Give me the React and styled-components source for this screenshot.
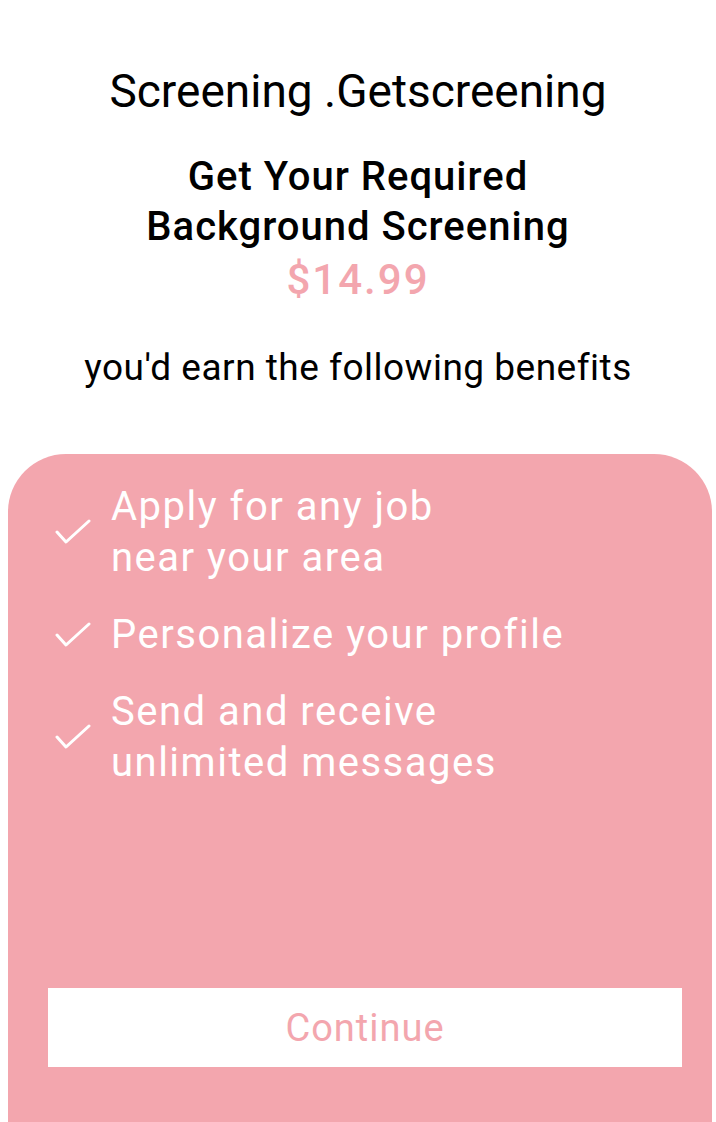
import styled, { createGlobalStyle } from 'styled-components';

const GlobalStyle = createGlobalStyle`
  html, body {
    margin: 0;
    padding: 0;
    background: #ffffff;
    font-family: Roboto, "Liberation Sans", Arial, sans-serif;
  }
`;

const PINK = '#f3a6ae';

const Page = styled.div`
  width: 716px;
  height: 1122px;
  display: flex;
  flex-direction: column;
  overflow: hidden;
`;

const Header = styled.div`
  display: flex;
  flex-direction: column;
  align-items: center;
  text-align: center;
  padding-top: 63px;
  height: 390px;
  box-sizing: border-box;
  color: #000;
`;

const Title = styled.h1`
  margin: 0;
  font-size: 46px;
  font-weight: 400;
  line-height: 56px;
`;

const Offer = styled.h2`
  margin: 33px 0 0;
  font-size: 40px;
  font-weight: 500;
  letter-spacing: 1px;
  line-height: 50px;
`;

const Price = styled.div`
  margin-top: 2px;
  font-size: 42px;
  font-weight: 500;
  letter-spacing: 2px;
  line-height: 52px;
  color: ${PINK};
`;

const Subtitle = styled.p`
  margin: 38px 0 0;
  font-size: 37px;
  letter-spacing: 0.5px;
  line-height: 48px;
`;

const Panel = styled.div`
  flex: 1;
  margin: 64px 4px 0 8px;
  background: ${PINK};
  border-radius: 58px 58px 0 0;
  display: flex;
  flex-direction: column;
  padding: 27px 30px 55px 40px;
`;

const List = styled.ul`
  list-style: none;
  margin: 0;
  padding: 0;
  display: flex;
  flex-direction: column;
  gap: 26px;
`;

const Item = styled.li`
  display: flex;
  align-items: center;
  gap: 20px;
  color: #fff;
  font-size: 40px;
  letter-spacing: 1.5px;
  line-height: 51px;
`;

const Check = styled.svg`
  width: 36px;
  height: 26px;
  flex: none;
  margin-left: 7px;
`;

const Spacer = styled.div`
  flex: 1;
`;

const ContinueButton = styled.button`
  height: 79px;
  width: 634px;
  border: none;
  background: #fff;
  color: ${PINK};
  font-family: Roboto, "Liberation Sans", Arial, sans-serif;
  font-size: 38px;
  letter-spacing: 1px;
  cursor: pointer;
`;

const benefits = [
  ['Apply for any job', 'near your area'],
  ['Personalize your profile'],
  ['Send and receive', 'unlimited messages'],
];

const CheckIcon = () => (
  <Check viewBox="0 0 36 26">
    <path d="M2 13 L11 23 L34 2" fill="none" stroke="#fff" strokeWidth="3" strokeLinecap="round" strokeLinejoin="round" />
  </Check>
);

const App = () => (
  <Page>
    <GlobalStyle />
    <Header>
      <Title>Screening .Getscreening</Title>
      <Offer>
        Get Your Required
        <br />
        Background Screening
      </Offer>
      <Price>$14.99</Price>
      <Subtitle>you'd earn the following benefits</Subtitle>
    </Header>
    <Panel>
      <List>
        {benefits.map((lines) => (
          <Item key={lines[0]}>
            <CheckIcon />
            <span>
              {lines.map((line, i) => (
                <span key={line}>
                  {i > 0 && <br />}
                  {line}
                </span>
              ))}
            </span>
          </Item>
        ))}
      </List>
      <Spacer />
      <ContinueButton>Continue</ContinueButton>
    </Panel>
  </Page>
);

export default App;
